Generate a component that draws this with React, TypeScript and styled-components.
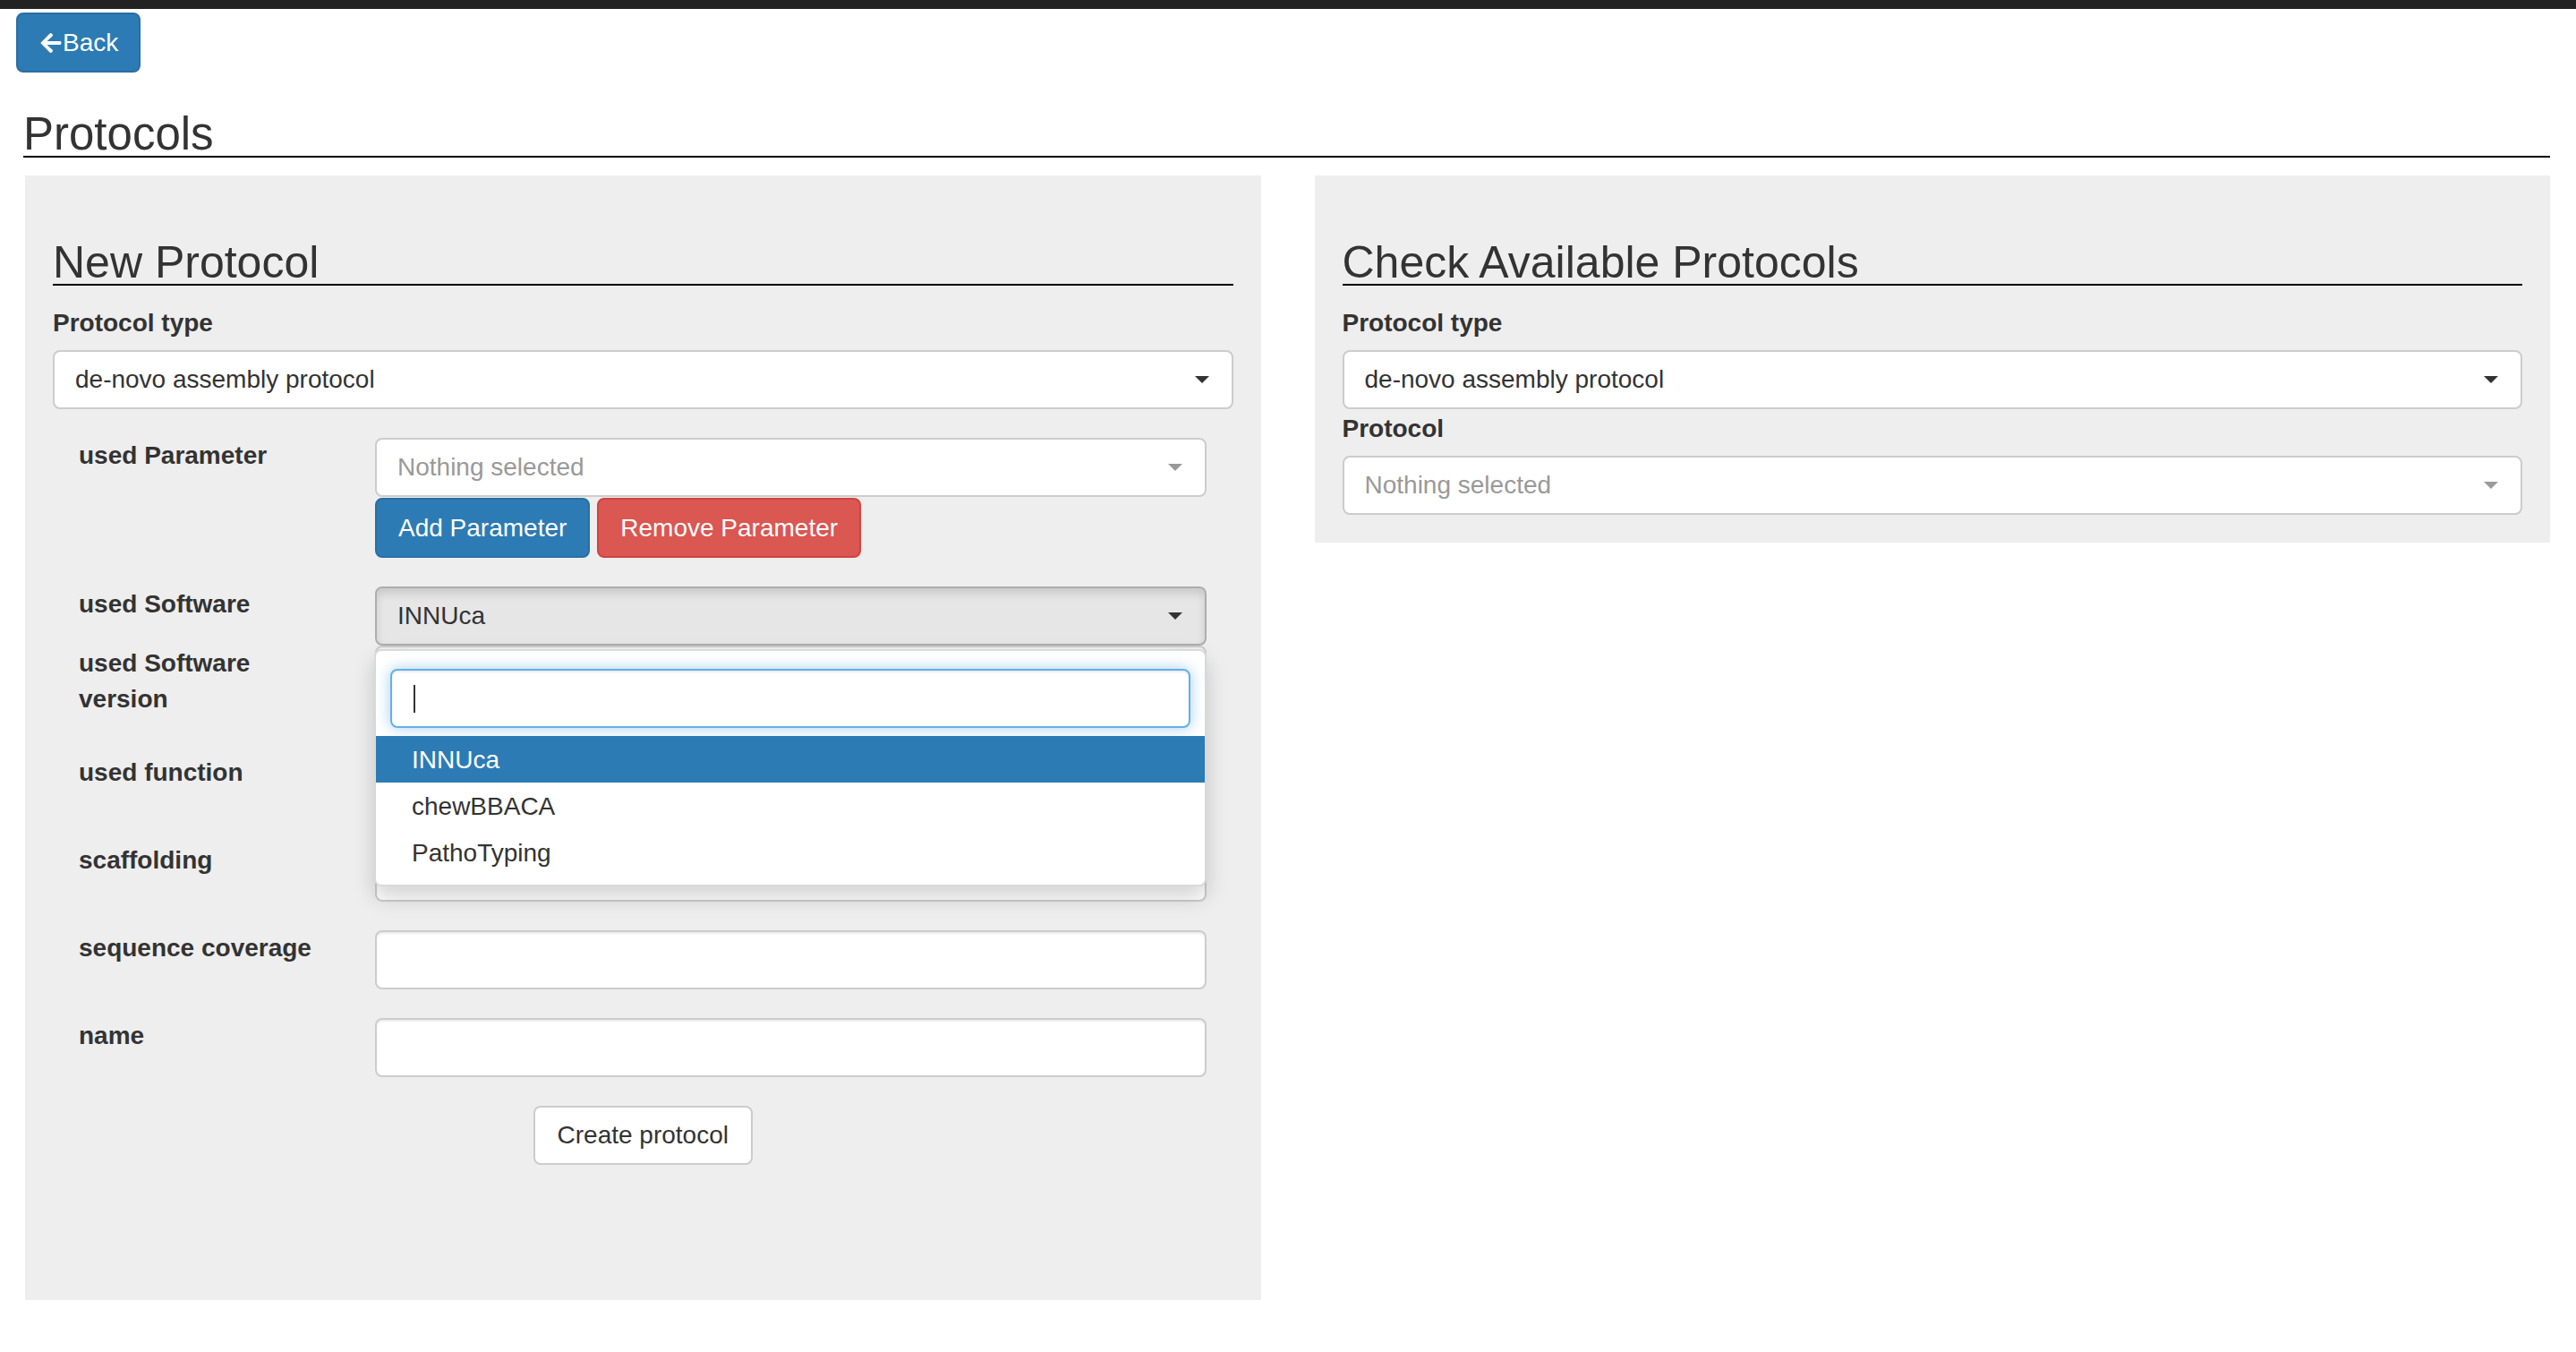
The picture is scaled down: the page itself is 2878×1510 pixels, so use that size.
import React from "react";
import styled, { createGlobalStyle } from "styled-components";
import { FaArrowLeft } from "react-icons/fa";

const GlobalStyle = createGlobalStyle`
  html, body { margin: 0; padding: 0; background: #fff; }
  body {
    font-family: "Liberation Sans", Arial, Helvetica, sans-serif;
    font-size: 28px;
    line-height: 40px;
    color: #333;
  }
  * { box-sizing: border-box; }
`;

const TopBar = styled.div`
  height: 10px;
  background: #222;
`;

const Toolbar = styled.div`
  display: flex;
  padding: 4px 18px 0;
`;

const BackButton = styled.button`
  display: inline-flex;
  align-items: center;
  gap: 0;
  height: 67px;
  padding: 0 23px 0 24px;
  background: #2d7bb4;
  border: 2px solid #2a6ea6;
  border-radius: 8px;
  color: #fff;
  font: inherit;
  cursor: pointer;
  svg { width: 26px; height: 26px; }
`;

const Main = styled.main`
  padding: 0 29px 0 28px;
`;

const PageTitle = styled.h1`
  margin: 45px 0 20px -2px;
  font-size: 51px;
  font-weight: 400;
  line-height: 48px;
  color: #333;
  border-bottom: 2px solid #000;
`;

const Columns = styled.div`
  display: grid;
  grid-template-columns: 1fr 1fr;
  column-gap: 60px;
  align-items: start;
`;

const Panel = styled.section<{ $padBottom: number }>`
  background: #eeeeee;
  padding: 73px 31px ${(p) => p.$padBottom}px;
`;

const SectionTitle = styled.h2`
  margin: 0 0 22px;
  font-size: 50px;
  font-weight: 400;
  line-height: 48px;
  color: #333;
  border-bottom: 2px solid #000;
`;

const StackLabel = styled.label<{ $gapTop?: number }>`
  display: block;
  font-weight: 700;
  margin: ${(p) => p.$gapTop ?? 0}px 0 10px;
`;

const SelectBox = styled.div<{ $open?: boolean; $empty?: boolean }>`
  display: flex;
  align-items: center;
  justify-content: space-between;
  height: 66px;
  padding: 0 25px 0 23px;
  background: ${(p) => (p.$open ? "#e6e6e6" : "#fff")};
  border: 2px solid ${(p) => (p.$open ? "#adadad" : "#ccc")};
  border-radius: 8px;
  box-shadow: ${(p) => (p.$open ? "inset 0 6px 10px rgba(0,0,0,0.125)" : "none")};
  color: ${(p) => (p.$empty ? "#999" : "#333")};
  white-space: nowrap;
`;

const Caret = styled.span<{ $muted?: boolean }>`
  flex: none;
  width: 0;
  height: 0;
  border-left: 8px solid transparent;
  border-right: 8px solid transparent;
  border-top: 8px solid ${(p) => (p.$muted ? "#999" : "#333")};
`;

const HorizontalForm = styled.div`
  margin-top: 32px;
  padding: 0 30px 0 29px;
`;

const FormRow = styled.div<{ $gap?: number }>`
  display: grid;
  grid-template-columns: 280px 1fr;
  column-gap: 51px;
  align-items: start;
  margin-bottom: ${(p) => (p.$gap ?? 32)}px;
`;

const RowLabel = styled.label`
  display: block;
  font-weight: 700;
  margin-bottom: 10px;
`;

const Control = styled.div`
  position: relative;
  min-width: 0;
`;

const TextInput = styled.input`
  display: block;
  width: 100%;
  height: 66px;
  padding: 0 24px;
  background: #fff;
  border: 2px solid #ccc;
  border-radius: 8px;
  box-shadow: inset 0 2px 2px rgba(0, 0, 0, 0.075);
  font: inherit;
  color: #333;
  outline: none;
`;

const ButtonRow = styled.div`
  display: flex;
  gap: 8px;
  margin-top: 1px;
`;

const ActionButton = styled.button<{ $variant: "primary" | "danger" | "default" }>`
  height: ${(p) => (p.$variant === "default" ? 66 : 67)}px;
  padding: 0 ${(p) => (p.$variant === "default" ? 25 : 24)}px;
  border-radius: 8px;
  font: inherit;
  cursor: pointer;
  white-space: nowrap;
  background: ${(p) =>
    p.$variant === "primary" ? "#2d7bb4" : p.$variant === "danger" ? "#da5752" : "#fff"};
  border: 2px solid
    ${(p) =>
      p.$variant === "primary" ? "#2a6ea6" : p.$variant === "danger" ? "#d2433e" : "#ccc"};
  color: ${(p) => (p.$variant === "default" ? "#333" : "#fff")};
`;

const CenterRow = styled.div`
  display: flex;
  justify-content: center;
`;

const DropdownMenu = styled.div`
  position: absolute;
  top: calc(100% + 4px);
  left: -1px;
  right: 0;
  z-index: 10;
  background: #fff;
  border: 2px solid rgba(0, 0, 0, 0.15);
  border-radius: 8px;
  box-shadow: 0 12px 24px rgba(0, 0, 0, 0.175);
  padding: 10px 0 10px;
`;

const SearchWrap = styled.div`
  padding: 10px 16px 9px;
`;

const SearchField = styled.div`
  display: flex;
  align-items: center;
  height: 66px;
  padding: 0 24px;
  background: #fff;
  border: 2px solid #66afe9;
  border-radius: 8px;
  box-shadow: inset 0 2px 2px rgba(0, 0, 0, 0.075), 0 0 16px rgba(102, 175, 233, 0.6);
`;

const TextCursor = styled.span`
  width: 2px;
  height: 31px;
  background: #333;
`;

const Option = styled.div<{ $active?: boolean }>`
  height: 52px;
  line-height: 54px;
  padding: 0 40px;
  background: ${(p) => (p.$active ? "#2d7bb4" : "transparent")};
  color: ${(p) => (p.$active ? "#fff" : "#333")};
  white-space: nowrap;
`;

const software = ["INNUca", "chewBBACA", "PathoTyping"];

export default function App() {
  return (
    <>
      <GlobalStyle />
      <TopBar />
      <Toolbar>
        <BackButton>
          <FaArrowLeft />
          Back
        </BackButton>
      </Toolbar>
      <Main>
        <PageTitle>Protocols</PageTitle>
        <Columns>
          <Panel $padBottom={151}>
            <SectionTitle>New Protocol</SectionTitle>
            <StackLabel>Protocol type</StackLabel>
            <SelectBox>
              <span>de-novo assembly protocol</span>
              <Caret />
            </SelectBox>

            <HorizontalForm>
              <FormRow>
                <RowLabel>used Parameter</RowLabel>
                <Control>
                  <SelectBox $empty>
                    <span>Nothing selected</span>
                    <Caret $muted />
                  </SelectBox>
                  <ButtonRow>
                    <ActionButton $variant="primary">Add Parameter</ActionButton>
                    <ActionButton $variant="danger">Remove Parameter</ActionButton>
                  </ButtonRow>
                </Control>
              </FormRow>

              <FormRow $gap={0}>
                <RowLabel>used Software</RowLabel>
                <Control>
                  <SelectBox $open>
                    <span>INNUca</span>
                    <Caret />
                  </SelectBox>
                  <DropdownMenu>
                    <SearchWrap>
                      <SearchField>
                        <TextCursor />
                      </SearchField>
                    </SearchWrap>
                    {software.map((s, i) => (
                      <Option key={s} $active={i === 0}>
                        {s}
                      </Option>
                    ))}
                  </DropdownMenu>
                </Control>
              </FormRow>

              <FormRow>
                <RowLabel>used Software version</RowLabel>
                <Control>
                  <TextInput readOnly />
                </Control>
              </FormRow>

              <FormRow>
                <RowLabel>used function</RowLabel>
                <Control>
                  <TextInput readOnly />
                </Control>
              </FormRow>

              <FormRow>
                <RowLabel>scaffolding</RowLabel>
                <Control>
                  <TextInput readOnly />
                </Control>
              </FormRow>

              <FormRow>
                <RowLabel>sequence coverage</RowLabel>
                <Control>
                  <TextInput readOnly />
                </Control>
              </FormRow>

              <FormRow>
                <RowLabel>name</RowLabel>
                <Control>
                  <TextInput readOnly />
                </Control>
              </FormRow>
            </HorizontalForm>

            <CenterRow>
              <ActionButton $variant="default">Create protocol</ActionButton>
            </CenterRow>
          </Panel>

          <Panel $padBottom={31}>
            <SectionTitle>Check Available Protocols</SectionTitle>
            <StackLabel>Protocol type</StackLabel>
            <SelectBox>
              <span>de-novo assembly protocol</span>
              <Caret />
            </SelectBox>
            <StackLabel $gapTop={2}>Protocol</StackLabel>
            <SelectBox $empty>
              <span>Nothing selected</span>
              <Caret $muted />
            </SelectBox>
          </Panel>
        </Columns>
      </Main>
    </>
  );
}
